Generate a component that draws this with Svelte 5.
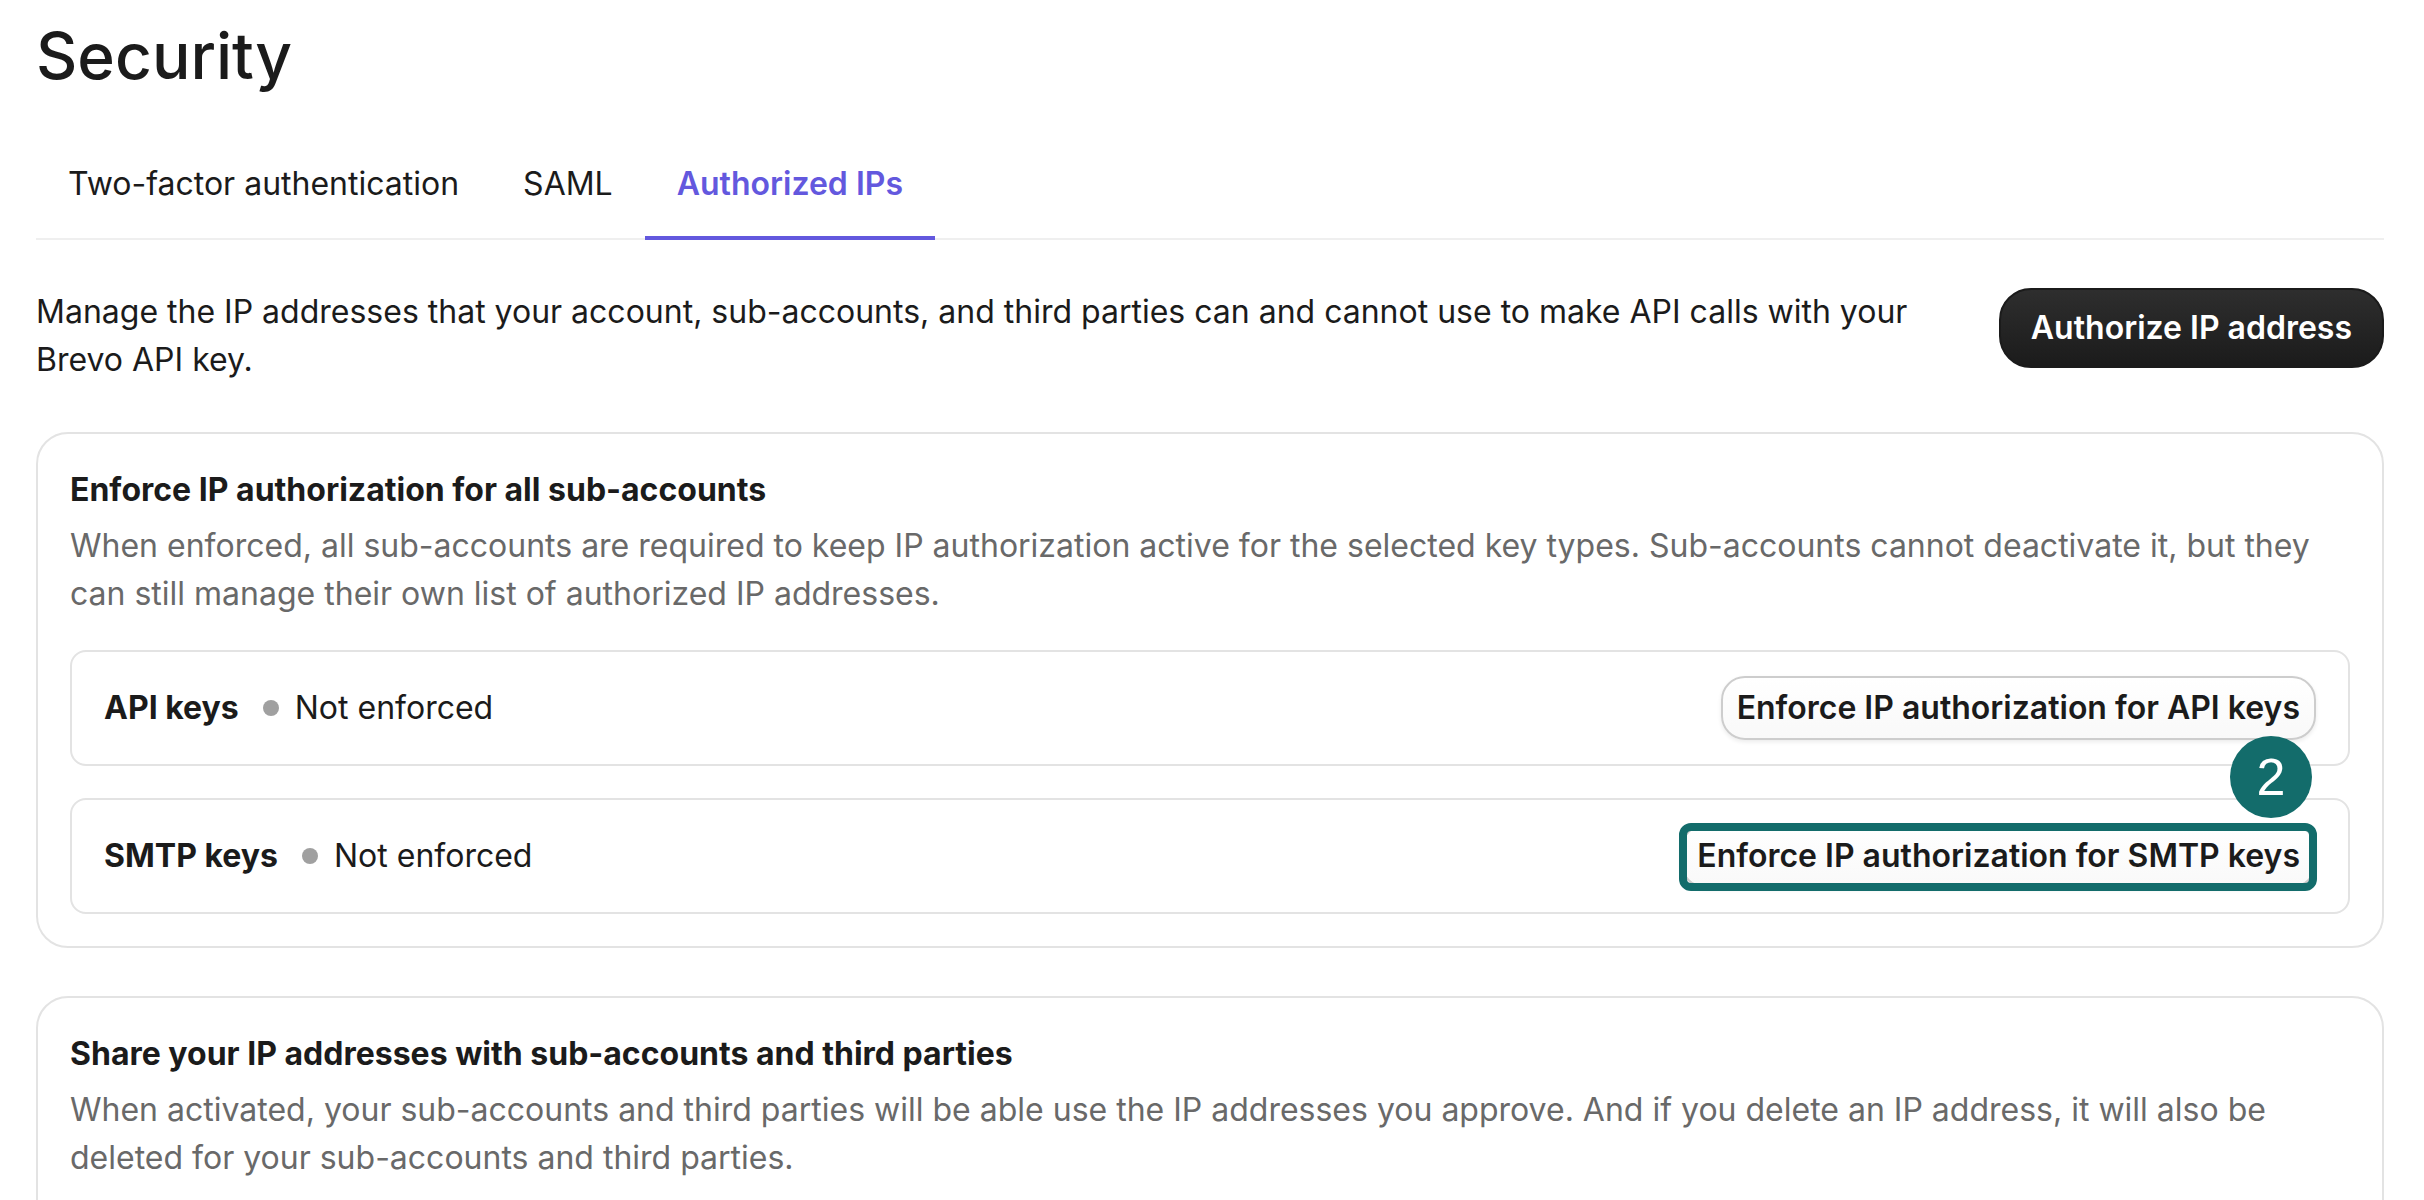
<script lang="ts">
	const tabs = ['Two-factor authentication', 'SAML', 'Authorized IPs'];
	let activeTab = $state('Authorized IPs');

	const keyTypes = [
		{ name: 'API keys', step: null },
		{ name: 'SMTP keys', step: 2 }
	];
</script>

<main>
	<h1>Security</h1>

	<div class="tabs" role="tablist">
		{#each tabs as tab}
			<button
				class="tab"
				class:active={tab === activeTab}
				role="tab"
				aria-selected={tab === activeTab}
				onclick={() => (activeTab = tab)}>{tab}</button
			>
		{/each}
	</div>

	<div class="intro">
		<p>
			Manage the IP addresses that your account, sub-accounts, and third parties can and cannot use
			to make API calls with your Brevo API key.
		</p>
		<button class="primary">Authorize IP address</button>
	</div>

	<section>
		<h2>Enforce IP authorization for all sub-accounts</h2>
		<p>
			When enforced, all sub-accounts are required to keep IP authorization active for the selected
			key types. Sub-accounts cannot deactivate it, but they can still manage their own list of
			authorized IP addresses.
		</p>
		<ul>
			{#each keyTypes as key}
				<li>
					<h3>{key.name}</h3>
					<span class="status">Not enforced</span>
					<div class="action">
						<button class="secondary">Enforce IP authorization for {key.name}</button>
						{#if key.step}
							<span class="highlight"></span>
							<span class="step">{key.step}</span>
						{/if}
					</div>
				</li>
			{/each}
		</ul>
	</section>

	<section class="share">
		<h2>Share your IP addresses with sub-accounts and third parties</h2>
		<p>
			When activated, your sub-accounts and third parties will be able use the IP addresses you
			approve. And if you delete an IP address, it will also be deleted for your sub-accounts and
			third parties.
		</p>
	</section>
</main>

<style>
	:global(body) {
		background: #fff;
	}
	main {
		box-sizing: border-box;
		height: 100vh;
		overflow: hidden;
		padding: 16px 40px 0 36px;
		font-family: Inter, 'Liberation Sans', sans-serif;
		font-size: 32px;
		line-height: 48px;
		color: #1b1b1b;
	}
	h1,
	h2,
	h3,
	p,
	ul {
		margin: 0;
		padding: 0;
	}
	h1 {
		font-size: 64px;
		line-height: 80px;
		font-weight: 500;
	}
	h2,
	h3 {
		font-size: 32px;
		font-weight: 700;
	}
	button {
		box-sizing: border-box;
		font: inherit;
		color: inherit;
		cursor: pointer;
		white-space: nowrap;
	}
	.tabs {
		display: flex;
		margin-top: 32px;
		box-shadow: inset 0 -2px #efefef;
	}
	.tab {
		padding: 32px 32px 28px;
		border: 0;
		border-bottom: 4px solid transparent;
		background: none;
	}
	.tab.active {
		border-color: #6358de;
		color: #6358de;
		font-weight: 600;
	}
	.intro {
		display: flex;
		align-items: flex-start;
		gap: 64px;
		margin-top: 48px;
	}
	.intro p {
		flex: 1;
	}
	.primary {
		height: 80px;
		padding: 0 30px;
		border: 2px solid #1b1b1b;
		border-radius: 32px;
		background: linear-gradient(#2e2e2e, #1b1b1b);
		color: #fff;
		font-weight: 600;
	}
	section {
		margin-top: 48px;
		padding: 32px;
		border: 2px solid #e3e3e3;
		border-radius: 32px;
	}
	.share {
		padding-bottom: 64px;
	}
	section p {
		margin-top: 8px;
		color: #696969;
	}
	ul {
		display: flex;
		flex-direction: column;
		gap: 32px;
		margin-top: 32px;
		list-style: none;
	}
	li {
		display: flex;
		align-items: center;
		padding: 24px 32px;
		border: 2px solid #e3e3e3;
		border-radius: 16px;
	}
	.status {
		display: flex;
		align-items: center;
		gap: 16px;
		margin-left: 24px;
	}
	.status::before {
		content: '';
		width: 16px;
		height: 16px;
		border-radius: 50%;
		background: #a0a0a0;
	}
	.action {
		position: relative;
		display: flex;
		margin-left: auto;
	}
	.secondary {
		height: 64px;
		padding: 0 14px;
		border: 2px solid #cdcdcd;
		border-radius: 24px;
		background: linear-gradient(#fff, #f9f9f9);
		box-shadow: 0 2px 4px rgba(0, 0, 0, 0.08);
		font-weight: 600;
	}
	.highlight {
		position: absolute;
		inset: -1px -1px -3px -2px;
		border: 8px solid #136c6b;
		border-radius: 12px;
		pointer-events: none;
	}
	.step {
		position: absolute;
		right: 4px;
		bottom: 70px;
		width: 82px;
		height: 82px;
		border-radius: 50%;
		background: #136c6b;
		color: #fff;
		font-family: 'Liberation Sans', Arial, sans-serif;
		font-size: 52px;
		line-height: 82px;
		text-align: center;
	}
</style>
